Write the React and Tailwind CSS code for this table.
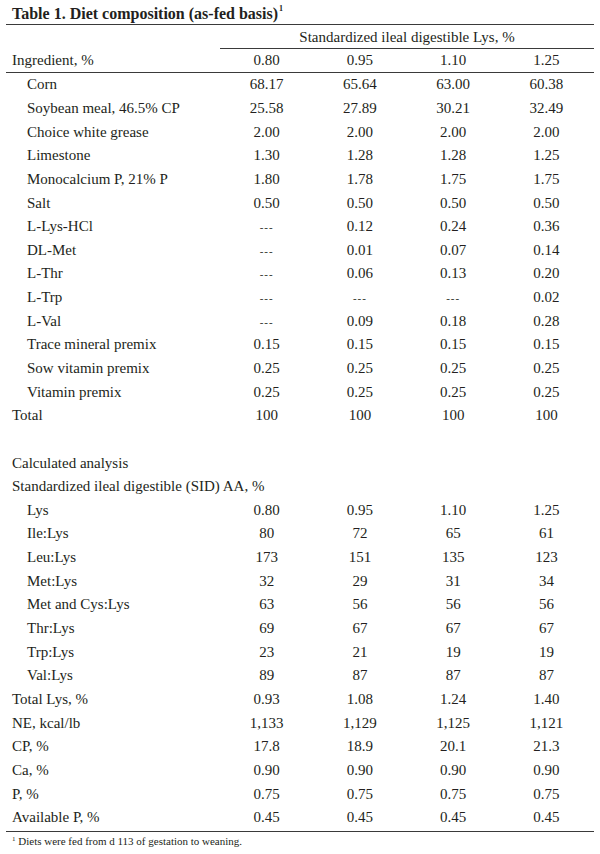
const cols = ["0.80", "0.95", "1.10", "1.25"];

const rows = [
  { label: "Corn", indent: true, v: ["68.17", "65.64", "63.00", "60.38"] },
  { label: "Soybean meal, 46.5% CP", indent: true, v: ["25.58", "27.89", "30.21", "32.49"] },
  { label: "Choice white grease", indent: true, v: ["2.00", "2.00", "2.00", "2.00"] },
  { label: "Limestone", indent: true, v: ["1.30", "1.28", "1.28", "1.25"] },
  { label: "Monocalcium P, 21% P", indent: true, v: ["1.80", "1.78", "1.75", "1.75"] },
  { label: "Salt", indent: true, v: ["0.50", "0.50", "0.50", "0.50"] },
  { label: "L-Lys-HCl", indent: true, v: ["---", "0.12", "0.24", "0.36"] },
  { label: "DL-Met", indent: true, v: ["---", "0.01", "0.07", "0.14"] },
  { label: "L-Thr", indent: true, v: ["---", "0.06", "0.13", "0.20"] },
  { label: "L-Trp", indent: true, v: ["---", "---", "---", "0.02"] },
  { label: "L-Val", indent: true, v: ["---", "0.09", "0.18", "0.28"] },
  { label: "Trace mineral premix", indent: true, v: ["0.15", "0.15", "0.15", "0.15"] },
  { label: "Sow vitamin premix", indent: true, v: ["0.25", "0.25", "0.25", "0.25"] },
  { label: "Vitamin premix", indent: true, v: ["0.25", "0.25", "0.25", "0.25"] },
  { label: "Total", v: ["100", "100", "100", "100"] },
  { label: "", v: [] },
  { label: "Calculated analysis", v: [] },
  { label: "Standardized ileal digestible (SID) AA, %", v: [] },
  { label: "Lys", indent: true, v: ["0.80", "0.95", "1.10", "1.25"] },
  { label: "Ile:Lys", indent: true, v: ["80", "72", "65", "61"] },
  { label: "Leu:Lys", indent: true, v: ["173", "151", "135", "123"] },
  { label: "Met:Lys", indent: true, v: ["32", "29", "31", "34"] },
  { label: "Met and Cys:Lys", indent: true, v: ["63", "56", "56", "56"] },
  { label: "Thr:Lys", indent: true, v: ["69", "67", "67", "67"] },
  { label: "Trp:Lys", indent: true, v: ["23", "21", "19", "19"] },
  { label: "Val:Lys", indent: true, v: ["89", "87", "87", "87"] },
  { label: "Total Lys, %", v: ["0.93", "1.08", "1.24", "1.40"] },
  { label: "NE, kcal/lb", v: ["1,133", "1,129", "1,125", "1,121"] },
  { label: "CP, %", v: ["17.8", "18.9", "20.1", "21.3"] },
  { label: "Ca, %", v: ["0.90", "0.90", "0.90", "0.90"] },
  { label: "P, %", v: ["0.75", "0.75", "0.75", "0.75"] },
  { label: "Available P, %", v: ["0.45", "0.45", "0.45", "0.45"] },
];

function Row({ label, indent, v }) {
  return (
    <div className="flex h-[23.65px] items-center">
      <div className={`w-[214px] whitespace-nowrap ${indent ? "pl-[21px]" : "pl-[6px]"}`}>{label}</div>
      {v.map((x, i) => (
        <div key={i} className="w-[93.25px] text-center">
          {x === "---" ? <span className="text-[11px] tracking-[1px]">---</span> : x}
        </div>
      ))}
    </div>
  );
}

export default function App() {
  return (
    <div className="w-[600px] h-[854px] bg-white text-[#231f20] text-[15px] leading-none px-[6px] pt-[4px]" style={{ fontFamily: '"Liberation Serif", serif' }}>
      <div className="h-[20px] pl-[6px] font-bold text-[16px] flex items-center">
        Table 1. Diet composition (as-fed basis)<sup className="text-[8px] ml-[1px] -top-[5px]">1</sup>
      </div>
      <div className="border-t-[1.5px] border-[#3a3a3a]" />
      <div className="flex h-[23px] items-center pt-[2px]">
        <div className="w-[214px]" />
        <div className="flex-1 text-center">Standardized ileal digestible Lys, %</div>
      </div>
      <div className="ml-[214px] border-t-[1.5px] border-[#3a3a3a]" />
      <div className="flex h-[23px] items-center">
        <div className="w-[214px] pl-[6px]">Ingredient, %</div>
        {cols.map((c) => (
          <div key={c} className="w-[93.25px] text-center">{c}</div>
        ))}
      </div>
      <div className="border-t-[1.5px] border-[#3a3a3a]" />
      {rows.map((r, i) => (
        <Row key={i} {...r} />
      ))}
      <div className="mt-[1px] border-t-[1.5px] border-[#3a3a3a]" />
      <div className="pl-[6px] pt-[4px] text-[11px]">
        <sup className="text-[7px] -top-[4px]">1</sup> Diets were fed from d 113 of gestation to weaning.
      </div>
    </div>
  );
}
